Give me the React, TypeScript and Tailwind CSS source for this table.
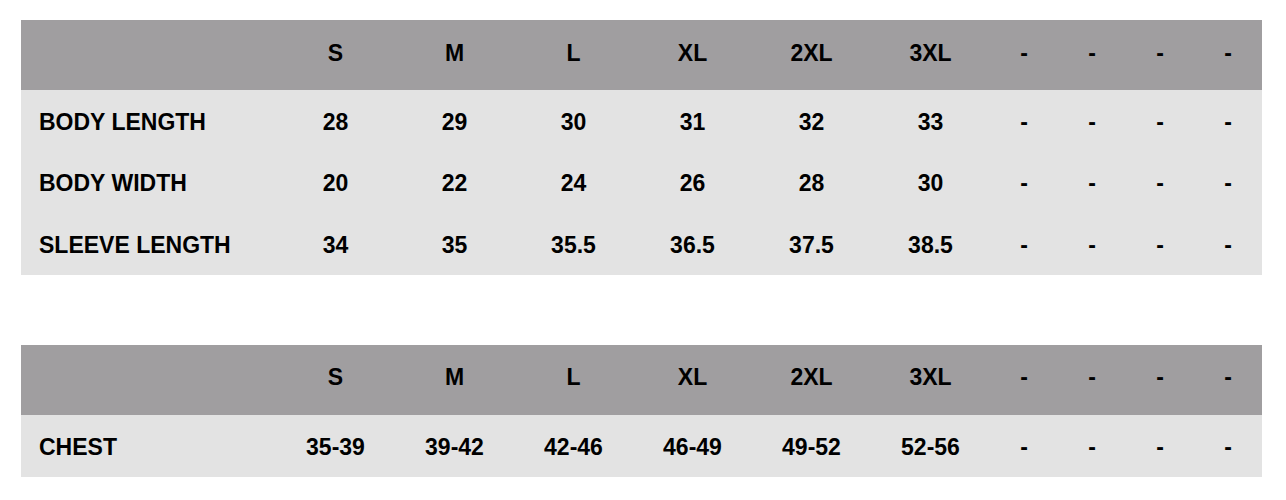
import React from 'react';

const sizes = ['S', 'M', 'L', 'XL', '2XL', '3XL'];

const measurements = [
  { label: 'BODY LENGTH', values: ['28', '29', '30', '31', '32', '33'] },
  { label: 'BODY WIDTH', values: ['20', '22', '24', '26', '28', '30'] },
  { label: 'SLEEVE LENGTH', values: ['34', '35', '35.5', '36.5', '37.5', '38.5'] },
];

const chest = [{ label: 'CHEST', values: ['35-39', '39-42', '42-46', '46-49', '49-52', '52-56'] }];

const cols = 'grid grid-cols-[255px_repeat(6,119px)_repeat(4,68px)]';

const SizeTable: React.FC<{ rows: { label: string; values: string[] }[] }> = ({ rows }) => (
  <div className="w-[1241px]">
    <div className={`${cols} h-[70px] bg-[#a09ea0] items-center pb-[4px]`}>
      <div />
      {sizes.map((s) => (
        <div key={s} className="text-center">{s}</div>
      ))}
      {[0, 1, 2, 3].map((i) => (
        <div key={i} className="text-center">-</div>
      ))}
    </div>
    <div className="bg-[#e3e3e3]">
      {rows.map((r) => (
        <div key={r.label} className={`${cols} h-[61.67px] items-center pt-[3px]`}>
          <div className="pl-[18px]">{r.label}</div>
          {r.values.map((v, i) => (
            <div key={i} className="text-center">{v}</div>
          ))}
          {[0, 1, 2, 3].map((i) => (
            <div key={i} className="text-center">-</div>
          ))}
        </div>
      ))}
    </div>
  </div>
);

const App: React.FC = () => {
  return (
    <div className="bg-white w-[1286px] h-[500px] pt-5 pl-[21px] font-['Liberation_Sans',Arial,sans-serif] font-bold text-[23px] leading-none text-black">
      <SizeTable rows={measurements} />
      <div className="h-[70px]" />
      <SizeTable rows={chest} />
    </div>
  );
};

export default App;
